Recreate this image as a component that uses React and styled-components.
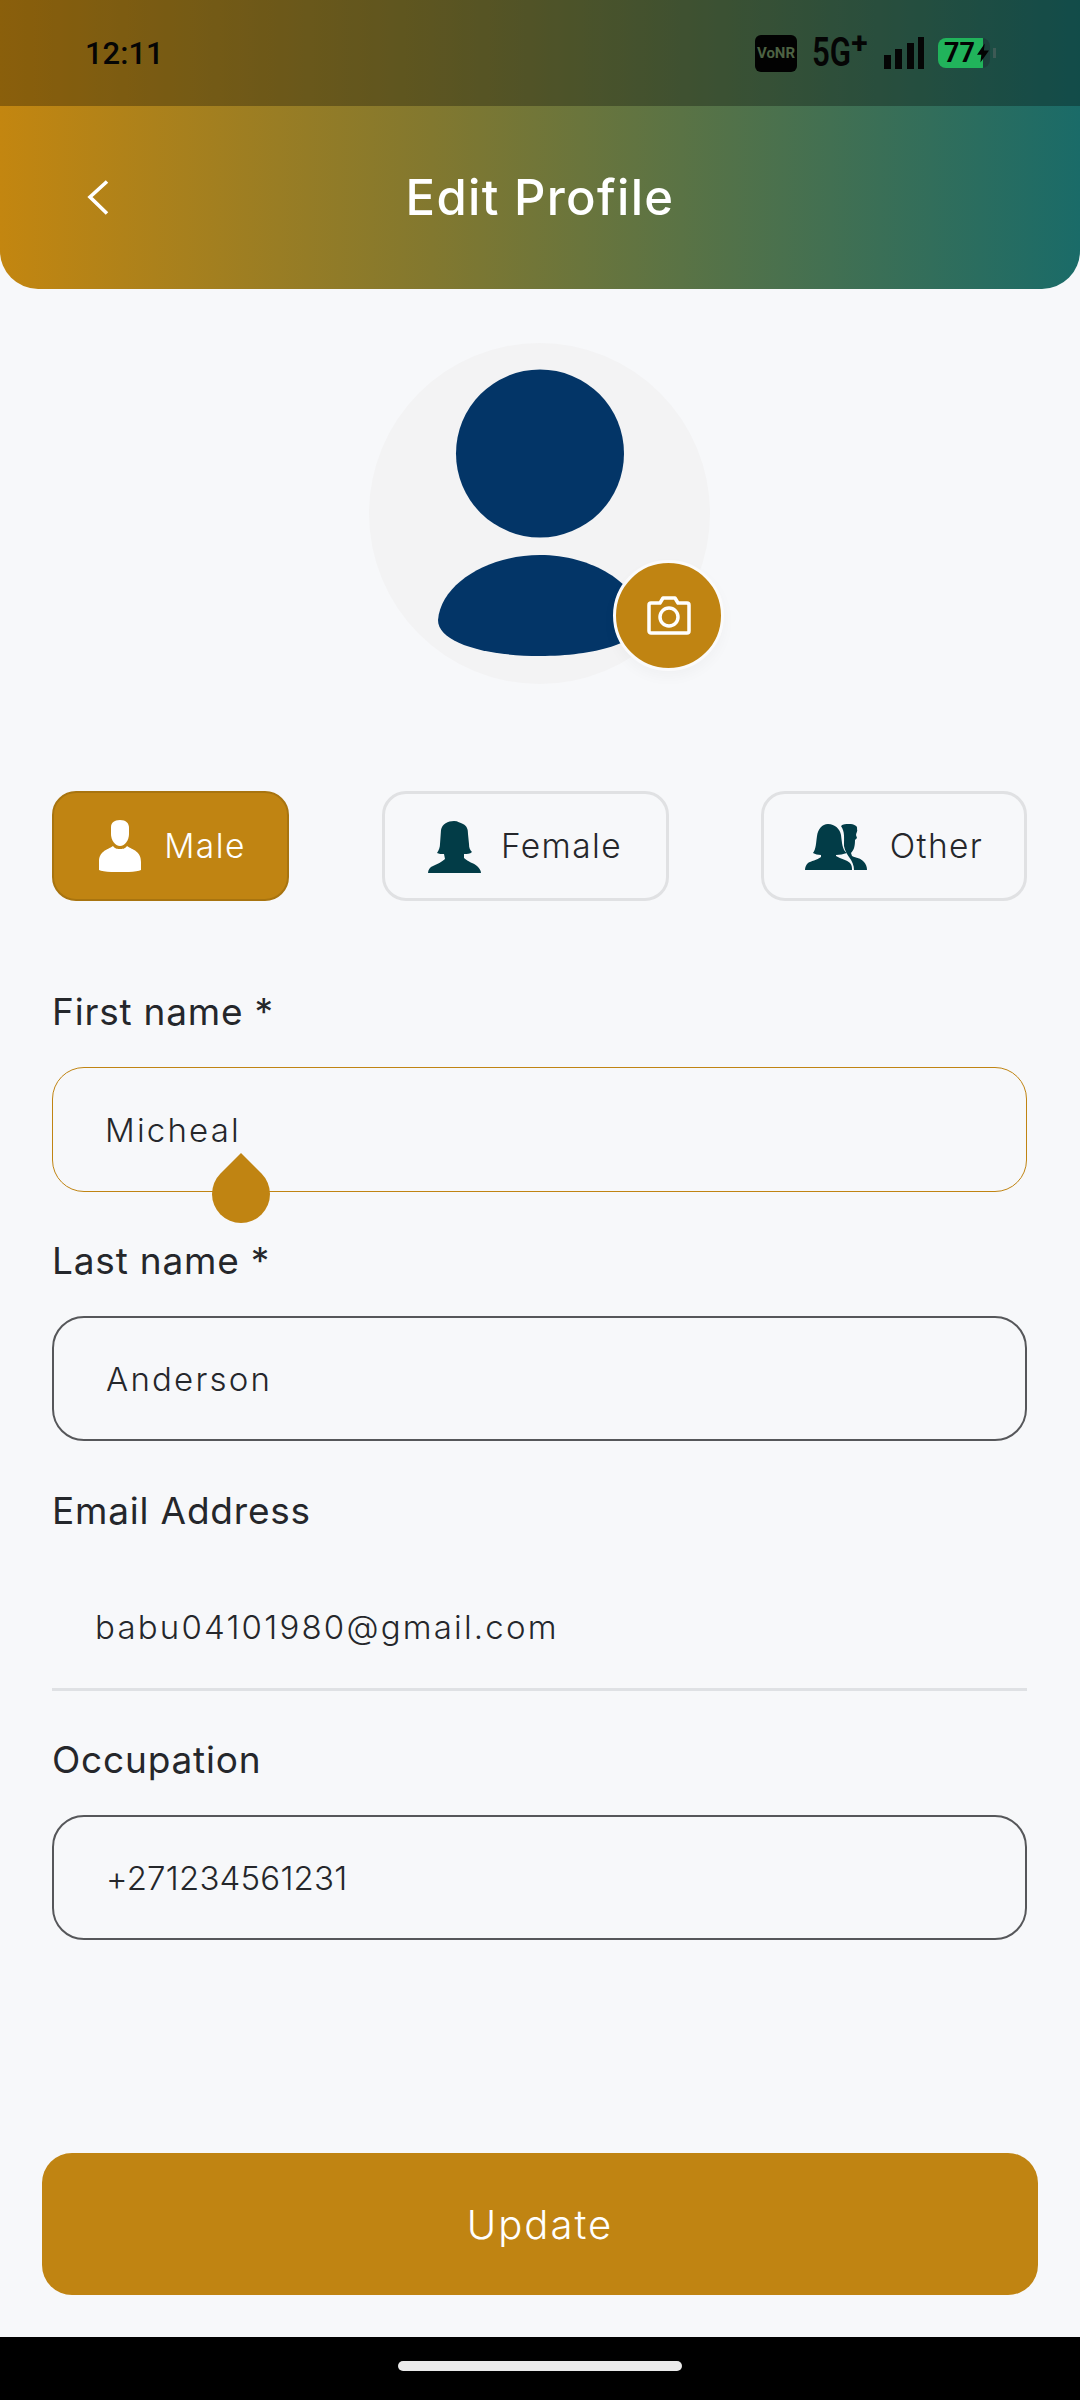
import React from 'react';
import styled, { createGlobalStyle } from 'styled-components';

const GOLD = '#c08412';
const TEAL = '#023c47';
const INK = '#25272b';
const FONT = '"Inter", "Noto Sans", "Liberation Sans", sans-serif';

const GlobalStyle = createGlobalStyle`
  html, body {
    margin: 0;
    padding: 0;
    background: #f7f8fa;
  }
  * {
    box-sizing: border-box;
  }
`;

const Screen = styled.div`
  width: 1080px;
  height: 2400px;
  display: flex;
  flex-direction: column;
  background: #f7f8fa;
  font-family: ${FONT};
  color: ${INK};
  overflow: hidden;
`;

const Header = styled.header`
  height: 289px;
  flex-shrink: 0;
  background: linear-gradient(90deg, #c38610 0%, #82782f 40%, #1a6b68 100%);
  border-radius: 0 0 38px 38px;
  overflow: hidden;
`;

const StatusBar = styled.div`
  height: 106px;
  display: flex;
  align-items: center;
  padding: 0 84px 0 85px;
  background: rgba(0, 0, 0, 0.29);
`;

const Clock = styled.span`
  font-family: Roboto, sans-serif;
  font-size: 31px;
  font-weight: 500;
  color: #050505;
`;

const StatusIcons = styled.div`
  margin-left: auto;
  display: flex;
  align-items: center;
`;

const VoNR = styled.span`
  width: 42px;
  height: 37px;
  border-radius: 6px;
  background: #020202;
  color: #4d6243;
  font-family: Roboto, sans-serif;
  font-size: 15px;
  font-weight: 700;
  display: flex;
  align-items: center;
  justify-content: center;
`;

const Network = styled.span`
  width: 56px;
  margin-left: 15px;
  font-family: Roboto, sans-serif;
  font-size: 40px;
  line-height: 38px;
  color: #050505;
  display: flex;
  align-items: flex-start;
  sup {
    font-size: 30px;
    line-height: 20px;
    font-weight: 700;
    margin: -1px 0 0 -11px;
  }
  b {
    font-weight: 600;
    display: inline-block;
    transform: scaleX(0.78);
    transform-origin: left center;
  }
`;

const Signal = styled.svg`
  width: 40px;
  height: 32px;
  margin-left: 16px;
  display: block;
`;

const Battery = styled.div`
  position: relative;
  width: 52px;
  height: 30px;
  margin-left: 14px;
  border-radius: 8px;
  background: linear-gradient(90deg, #21b35b 0 45px, #1c3f3b 45px);
  display: flex;
  align-items: center;
  padding-left: 6px;
  font-family: Roboto, sans-serif;
  font-size: 27px;
  font-weight: 700;
  color: #030303;
  svg {
    position: absolute;
    left: 39px;
    top: 5px;
  }
`;

const BatteryCap = styled.span`
  width: 3px;
  height: 10px;
  margin-left: 3px;
  background: #3d5a55;
`;

const TitleBar = styled.div`
  height: 183px;
  position: relative;
  display: flex;
  align-items: center;
  justify-content: center;
  padding-bottom: 1px;
`;

const BackButton = styled.svg`
  position: absolute;
  left: 86px;
  top: 74px;
  width: 25px;
  height: 35px;
`;

const Title = styled.h1`
  margin: 0;
  font-size: 49px;
  font-weight: 500;
  color: #fff;
  letter-spacing: 1.3px;
`;

const Main = styled.main`
  flex: 1;
  display: flex;
  flex-direction: column;
`;

const Content = styled.div`
  padding: 54px 53px 0 52px;
  display: flex;
  flex-direction: column;
`;

const Avatar = styled.div`
  position: relative;
  align-self: center;
  width: 341px;
  height: 341px;
  border-radius: 50%;
  background: #f3f3f4;
`;

const AvatarArt = styled.svg`
  display: block;
  width: 341px;
  height: 341px;
`;

const CameraBadge = styled.div`
  position: absolute;
  left: 244px;
  top: 217px;
  width: 111px;
  height: 111px;
  border-radius: 50%;
  background: ${GOLD};
  border: 3px solid #fbfbfc;
  box-shadow: 0 6px 14px rgba(0, 0, 0, 0.03);
  display: flex;
  align-items: center;
  justify-content: center;
`;

const GenderRow = styled.div`
  margin-top: 107px;
  display: flex;
  justify-content: space-between;
`;

const GenderButton = styled.div`
  width: ${(p) => p.$width}px;
  height: 110px;
  border-radius: 24px;
  border: ${(p) => (p.$active ? '2px solid #a8740f' : '3px solid #e0e1e3')};
  background: ${(p) => (p.$active ? GOLD : 'transparent')};
  color: ${(p) => (p.$active ? '#fff' : INK)};
  display: flex;
  align-items: center;
  justify-content: center;
  gap: ${(p) => p.$gap}px;
  padding-left: ${(p) => p.$nudge ?? 0}px;
  font-size: 33.5px;
  font-weight: 300;
  letter-spacing: 1.4px;
  svg {
    display: block;
    flex-shrink: 0;
  }
`;

const Form = styled.div`
  margin-top: 86px;
  display: flex;
  flex-direction: column;
  gap: 44.4px;
`;

const Label = styled.div`
  height: 50px;
  margin-bottom: 30px;
  font-size: 37px;
  font-weight: 400;
  line-height: 50px;
  letter-spacing: 0.8px;
`;

const Control = styled.div`
  position: relative;
  height: 125px;
  display: flex;
  align-items: center;
  padding-left: ${(p) => (p.$flat ? 43 : 52)}px;
  font-size: 33px;
  font-weight: 350;
  letter-spacing: ${(p) => p.$spacing ?? 2.2}px;
  ${(p) =>
    p.$flat
      ? 'border-bottom: 3px solid #dfe1e4;'
      : `border: ${p.$focused ? `1px solid ${GOLD}` : '2px solid #56575a'}; border-radius: 32px;`}
`;

const Handle = styled.span`
  position: absolute;
  left: 159px;
  top: 97px;
  width: 58px;
  height: 58px;
  background: ${GOLD};
  border-radius: 50% 0 50% 50%;
  transform: rotate(-45deg);
`;

const ActionBar = styled.div`
  margin-top: auto;
  padding: 0 42px 42px;
`;

const UpdateButton = styled.div`
  height: 142px;
  border-radius: 30px;
  background: ${GOLD};
  color: #fff;
  display: flex;
  align-items: center;
  justify-content: center;
  font-size: 40px;
  font-weight: 300;
  letter-spacing: 2px;
`;

const NavBar = styled.div`
  height: 63px;
  flex-shrink: 0;
  background: #000;
  display: flex;
  justify-content: center;
  padding-top: 24px;
`;

const HomePill = styled.span`
  width: 284px;
  height: 10px;
  border-radius: 5px;
  background: #eaeaea;
`;

const MaleIcon = () => (
  <svg width="42" height="52" viewBox="0 0 42 52" fill="#fff">
    <path d="M21 0C27 0 30 3 30 8L30 14C30 20 26 26 21 26C16 26 12 20 12 14L12 7C12 3 15 0 21 0Z" />
    <path d="M14 26C16 29 19 29 21 29C23 29 26 29 28 26C34 30 42 31 42 42L42 50C36 53 6 53 0 50L0 42C0 31 8 30 14 26Z" />
  </svg>
);

const FemaleIcon = () => (
  <svg width="54" height="53" viewBox="0 0 54 53" fill={TEAL}>
    <path d="M26 1C30 1 32 3 35 4C39 6 40 9 40 14L41 24C41 28 42 30 44 32C42 34 39 34 36 34L36 38C40 42 46 43 49 46C51 48 53 50 53 53L0 53C0 50 2 47 5 46C9 44 14 42 17 39L16 34C13 34 11 34 9 33C11 30 12 27 12 24L13 10C14 4 20 1 26 1Z" />
  </svg>
);

const OtherIcon = () => (
  <svg width="62" height="52" viewBox="0 0 62 52" fill={TEAL}>
    <path d="M23 4C30 4 35 9 36 15C37 22 37 30 42 33C38 34 35 35 31 35L31 36C36 39 42 40 45 43C47 45 47 48 47 50L0 50C0 47 1 45 3 43C6 41 12 40 16 37L16 35C13 35 10 34 8 33C11 29 11 23 12 16C13 9 17 4 23 4Z" />
    <path d="M36 6C38 4 41 4 44 4C49 4 53 6 52 9C53 11 51 13 51 15L52 18L50 20C50 26 49 30 46 33L47 36C51 38 56 38 59 42C61 44 62 47 62 50L49 50C49 45 47 41 44 37C42 34 40 31 39 26C39 18 40 12 36 6Z" />
  </svg>
);

const CameraIcon = () => (
  <svg width="44" height="39" viewBox="0 0 44 39" fill="none" stroke="#fff" strokeWidth="3.5" strokeLinejoin="round">
    <path d="M13 7L16 2H28L31 7H40A2 2 0 0 1 42 9V35A2 2 0 0 1 40 37H4A2 2 0 0 1 2 35V9A2 2 0 0 1 4 7Z" />
    <circle cx="22" cy="21" r="9" />
  </svg>
);

const App = () => (
  <Screen>
    <GlobalStyle />
    <Header>
      <StatusBar>
        <Clock>12:11</Clock>
        <StatusIcons>
          <VoNR>VoNR</VoNR>
          <Network>
            <b>5G</b>
            <sup>+</sup>
          </Network>
          <Signal viewBox="0 0 40 32" fill="#050505">
            <rect x="0" y="18" width="7" height="14" />
            <rect x="11" y="12" width="7" height="20" />
            <rect x="23" y="6" width="7" height="26" />
            <rect x="34" y="0" width="6" height="32" />
          </Signal>
          <Battery>
            77
            <svg width="12" height="20" viewBox="0 0 14 22" fill="#030303">
              <path d="M9 0L0 13H5L4 22L14 8H8Z" />
            </svg>
          </Battery>
          <BatteryCap />
        </StatusIcons>
      </StatusBar>
      <TitleBar>
        <BackButton viewBox="0 0 25 35" fill="none" stroke="#fff" strokeWidth="3.6">
          <polyline points="21,1.5 4,17 21,33.5" />
        </BackButton>
        <Title>Edit Profile</Title>
      </TitleBar>
    </Header>

    <Main>
      <Content>
        <Avatar>
          <AvatarArt viewBox="0 0 341 341" fill="#033567">
            <circle cx="171" cy="110.5" r="84" />
            <path d="M69 277C72 240 120 212 171 212C222 212 270 240 273 277C273 300 225 313 171 313C117 313 69 300 69 277Z" />
          </AvatarArt>
          <CameraBadge>
            <CameraIcon />
          </CameraBadge>
        </Avatar>

        <GenderRow>
          <GenderButton $active $width={237} $gap={23} $nudge={4}>
            <MaleIcon />
            Male
          </GenderButton>
          <GenderButton $width={287} $gap={19}>
            <FemaleIcon />
            Female
          </GenderButton>
          <GenderButton $width={266} $gap={23}>
            <OtherIcon />
            Other
          </GenderButton>
        </GenderRow>

        <Form>
          <div>
            <Label>First name *</Label>
            <Control $focused>
              Micheal
              <Handle />
            </Control>
          </div>
          <div>
            <Label>Last name *</Label>
            <Control>Anderson</Control>
          </div>
          <div>
            <Label>Email Address</Label>
            <Control $flat>babu04101980@gmail.com</Control>
          </div>
          <div>
            <Label>Occupation</Label>
            <Control $spacing={0.2}>+271234561231</Control>
          </div>
        </Form>
      </Content>

      <ActionBar>
        <UpdateButton>Update</UpdateButton>
      </ActionBar>
    </Main>

    <NavBar>
      <HomePill />
    </NavBar>
  </Screen>
);

export default App;
